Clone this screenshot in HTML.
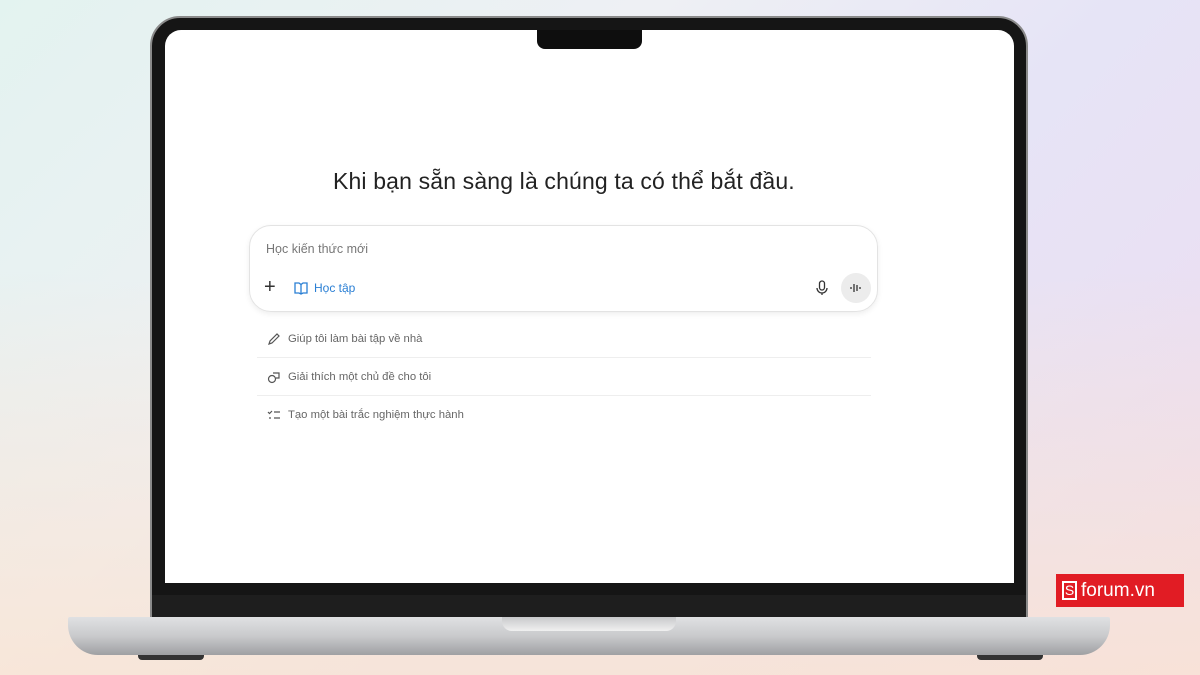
<!DOCTYPE html>
<html><head><meta charset="utf-8"><style>
*{margin:0;padding:0;box-sizing:border-box}
body{width:1200px;height:675px;overflow:hidden;position:relative;font-family:"Liberation Sans","DejaVu Sans",sans-serif;
background:linear-gradient(135deg,#e3f3f0 0%,#eef0f4 35%,#e6e4f6 60%,#eedcf0 100%);}
.bg2{position:absolute;inset:0;background:linear-gradient(180deg,rgba(255,255,255,0) 40%,rgba(250,228,210,.8) 100%)}
.lid{position:absolute;left:150px;top:16px;width:878px;height:602px;background:#151515;border-radius:30px 30px 0 0;border:2px solid #8a8a8a}
.screen{position:absolute;left:165px;top:30px;width:849px;height:553px;background:#fff;border-radius:16px 16px 0 0}
.notch{position:absolute;left:537px;top:30px;width:105px;height:19px;background:#0e0e0e;border-radius:0 0 8px 8px}
.chin{position:absolute;left:152px;top:595px;width:874px;height:22px;background:#1e1e1e}
.base{position:absolute;left:68px;top:617px;width:1042px;height:38px;border-radius:2px 2px 30px 30px;background:linear-gradient(180deg,#e0e1e3 0%,#c9cacc 50%,#9fa0a3 100%)}
.groove{position:absolute;left:502px;top:617px;width:174px;height:14px;background:linear-gradient(#c8c9cb,#f0f0f0);border-radius:0 0 10px 10px}
.foot{position:absolute;top:655px;width:66px;height:5px;background:#333;border-radius:0 0 4px 4px}
h1{position:absolute;left:333px;top:168px;white-space:nowrap;font-weight:400;font-size:23px;color:#222;letter-spacing:0.15px}
.box{position:absolute;left:249px;top:225px;width:629px;height:87px;border:1px solid #e3e3e3;border-radius:22px;box-shadow:0 2px 6px rgba(0,0,0,.07)}
.ph{position:absolute;left:16px;top:16px;font-size:12.5px;color:#777}
.plus{position:absolute;left:14px;top:50px;font-size:20px;color:#333}
.hoc{position:absolute;left:44px;top:55px;font-size:12px;color:#2a7fd4}
.mic{position:absolute;left:566px;top:54px}
.vb{position:absolute;left:591px;top:47px;width:30px;height:30px;border-radius:50%;background:#ececec}
.s{position:absolute;left:257px;width:614px;font-size:11.3px;color:#666;padding-left:31px;height:38px;line-height:38px}
.s svg{position:absolute;left:10px;top:12px}
.line{border-bottom:1px solid #eee}
.logo{position:absolute;left:1056px;top:574px;width:128px;height:33px;background:#e11c24;color:#fff;font-size:19px;line-height:33px;padding-left:25px}
.logo b{position:absolute;left:6px;top:7px;width:15px;height:19px;border:2px solid #fff;font-size:14px;line-height:15px;text-align:center;font-weight:400}
</style></head><body>
<div class="bg2"></div>
<div class="lid"></div>
<div class="screen"></div>
<div class="notch"></div>
<div class="chin"></div>
<div class="base"></div>
<div class="groove"></div>
<div class="foot" style="left:138px"></div>
<div class="foot" style="left:977px"></div>
<h1>Khi bạn sẵn sàng là chúng ta có thể bắt đầu.</h1>
<div class="box">
<div class="ph">Học kiến thức mới</div>
<div class="plus">+</div>
<svg style="position:absolute;left:44px;top:55px" width="14" height="14" viewBox="0 0 14 14" fill="none" stroke="#2a7fd4" stroke-width="1.3"><path d="M1 2h4l2 1.5L9 2h4v10H9l-2 1-2-1H1z M7 3.5v9"/></svg>
<div class="hoc" style="left:64px">Học tập</div>
<svg class="mic" width="12" height="16" viewBox="0 0 12 16" fill="none" stroke="#333" stroke-width="1.3"><rect x="3.5" y="1" width="5" height="9" rx="2.5"/><path d="M1 8a5 5 0 0 0 10 0M6 13v2"/></svg>
<div class="vb"><svg width="30" height="30" viewBox="0 0 30 30" stroke="#333" stroke-width="1.3"><path d="M10 14v2M13 11v8M16 12v6M19 14v2"/></svg></div>
</div>
<div class="s line" style="top:320px"><svg width="14" height="14" viewBox="0 0 14 14" fill="none" stroke="#555" stroke-width="1.2"><path d="M2 12l1-3 7-7 2 2-7 7z"/></svg>Giúp tôi làm bài tập về nhà</div>
<div class="s line" style="top:358px"><svg width="14" height="14" viewBox="0 0 14 14" fill="none" stroke="#555" stroke-width="1.2"><circle cx="5" cy="9" r="3.5"/><path d="M6 3h6v5h-3"/></svg>Giải thích một chủ đề cho tôi</div>
<div class="s" style="top:396px"><svg width="14" height="14" viewBox="0 0 14 14" fill="none" stroke="#555" stroke-width="1.2"><path d="M1 4l1.5 1.5L5 3M7 4h6M2 10h2M7 10h6"/></svg>Tạo một bài trắc nghiệm thực hành</div>
<div class="logo"><b>S</b>forum.vn</div>
</body></html>
